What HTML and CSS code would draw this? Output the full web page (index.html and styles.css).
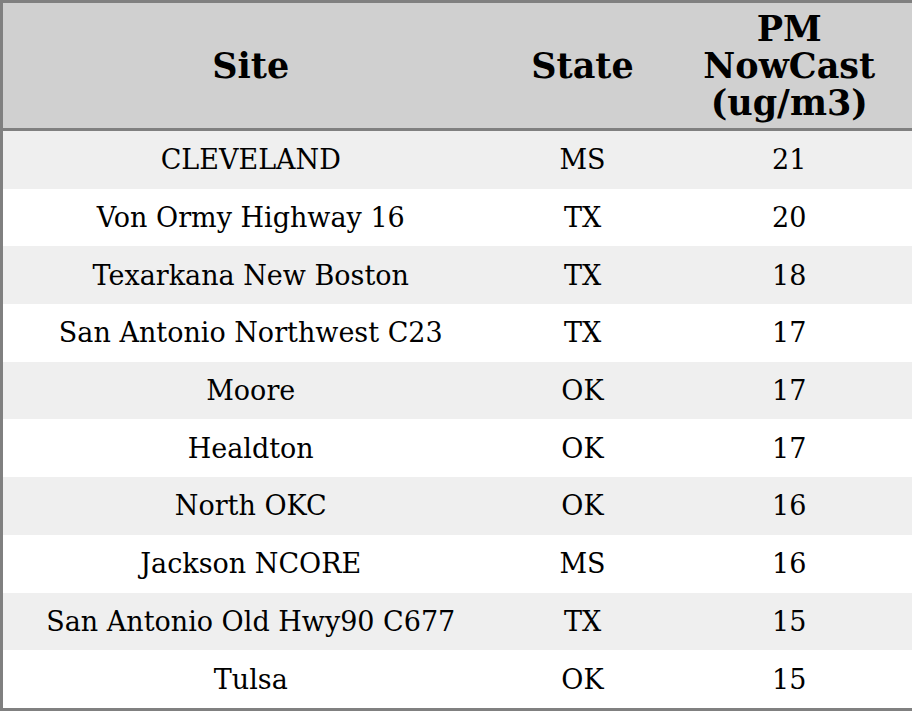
FILE: index.html
```html
<!DOCTYPE html>
<html>
<head>
<meta charset="utf-8">
<link rel="stylesheet" href="styles.css">
</head>
<body>
<table class="aq">
  <colgroup>
    <col class="c-site">
    <col class="c-state">
    <col class="c-pm">
  </colgroup>
  <thead>
    <tr><th>Site</th><th>State</th><th>PM<br>NowCast<br>(ug/m3)</th></tr>
  </thead>
  <tbody>
    <tr><td>CLEVELAND</td><td>MS</td><td>21</td></tr>
    <tr><td>Von Ormy Highway 16</td><td>TX</td><td>20</td></tr>
    <tr><td>Texarkana New Boston</td><td>TX</td><td>18</td></tr>
    <tr><td>San Antonio Northwest C23</td><td>TX</td><td>17</td></tr>
    <tr><td>Moore</td><td>OK</td><td>17</td></tr>
    <tr><td>Healdton</td><td>OK</td><td>17</td></tr>
    <tr><td>North OKC</td><td>OK</td><td>16</td></tr>
    <tr><td>Jackson NCORE</td><td>MS</td><td>16</td></tr>
    <tr><td>San Antonio Old Hwy90 C677</td><td>TX</td><td>15</td></tr>
    <tr><td>Tulsa</td><td>OK</td><td>15</td></tr>
  </tbody>
</table>
</body>
</html>
```
FILE: styles.css
```css
html, body {
  margin: 0;
  padding: 0;
  background: #ffffff;
}
.aq {
  width: 912px;
  border-collapse: collapse;
  table-layout: fixed;
  border: 3px solid #808080;
  font-family: "DejaVu Serif", serif;
  color: #000;
}
.c-site { width: 497px; }
.c-state { width: 168px; }
.c-pm { width: 247px; }
.aq th {
  background: #d0d0d0;
  font-weight: bold;
  font-size: 35px;
  line-height: 37px;
  height: 125px;
  padding: 0;
  text-align: center;
  vertical-align: middle;
  border-bottom: 3px solid #808080;
}
.aq td {
  font-size: 27px;
  height: 57.7px;
  padding: 0;
  text-align: center;
  vertical-align: middle;
}
.aq tbody tr:nth-child(odd) td {
  background: #efefef;
}
```
